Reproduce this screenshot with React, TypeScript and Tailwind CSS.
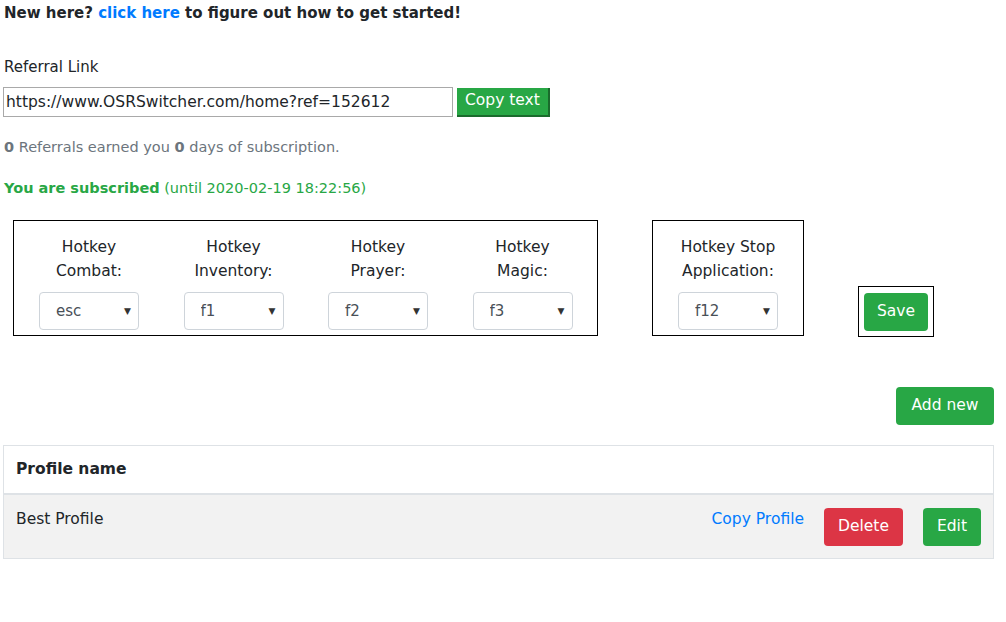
import React from 'react';

const font = { fontFamily: '"DejaVu Sans", "Open Sans", sans-serif' };

const hotkeys = [
  { top: 'Hotkey', bottom: 'Combat:', value: 'esc' },
  { top: 'Hotkey', bottom: 'Inventory:', value: 'f1' },
  { top: 'Hotkey', bottom: 'Prayer:', value: 'f2' },
  { top: 'Hotkey', bottom: 'Magic:', value: 'f3' },
];

function KeySelect({ value }: { value: string }) {
  return (
    <div className="relative w-[100px] h-[38px]">
      <select
        defaultValue={value}
        className="appearance-none w-full h-full bg-white border border-[#ced4da] rounded-[4px] pl-4 text-[15px] text-[#495057] outline-none"
      >
        <option value={value}>{value}</option>
      </select>
      {/* pijltje */}
      <span className="absolute right-[8px] top-[13px] text-[9px] text-[#333] pointer-events-none">▼</span>
    </div>
  );
}

function HotkeyCol({ top, bottom, value }: { top: string; bottom: string; value: string }) {
  return (
    <div className="flex flex-col items-center w-[100px]">
      <div className="text-[15.5px] leading-[24px] text-[#212529] text-center whitespace-nowrap">
        {top}
        <br />
        {bottom}
      </div>
      <div className="mt-[9px]">
        <KeySelect value={value} />
      </div>
    </div>
  );
}

export default function App() {
  return (
    <div className="min-h-screen bg-white pl-[4px] pr-[13px] text-[#212529]" style={font}>
      <p className="pt-[4px] text-[15px] font-bold leading-[18px]">
        New here? <a href="#" className="text-[#007bff]">click here</a> to figure out how to get started!
      </p>

      <div className="mt-[34px] text-[15px] leading-[22px]">Referral Link</div>
      <div className="flex items-center mt-[9px] -ml-[1px]">
        <input
          readOnly
          value="https://www.OSRSwitcher.com/home?ref=152612"
          className="w-[450px] h-[30px] border border-[#a9a9a9] px-[2px] text-[15.5px] text-[#212529] outline-none"
          style={font}
        />
        <button className="ml-[4px] h-[29px] px-[8px] bg-[#28a745] text-white text-[15.5px] border-b-2 border-r-2 border-[#1a6b2c]">
          Copy text
        </button>
      </div>

      <p className="mt-[20px] text-[14.5px] text-[#6c757d] leading-[20px]">
        <b>0</b> Referrals earned you <b>0</b> days of subscription.
      </p>

      <p className="mt-[20px] text-[14.5px] text-[#28a745] leading-[22px]">
        <b>You are subscribed</b> (until 2020-02-19 18:22:56)
      </p>

      <div className="flex items-start mt-[21px]">
        <div className="ml-[9px] w-[585px] h-[116px] border border-black flex items-start pt-[14px] pl-[25px] gap-[44.5px]">
          {hotkeys.map((h) => (
            <HotkeyCol key={h.bottom} {...h} />
          ))}
        </div>
        <div className="ml-[54px] w-[152px] h-[116px] border border-black flex justify-center pt-[14px]">
          <HotkeyCol top="Hotkey Stop" bottom="Application:" value="f12" />
        </div>
        <div className="ml-[54px] mt-[66px] w-[76px] h-[51px] border border-black flex items-center justify-center">
          <button className="w-[64px] h-[38px] bg-[#28a745] text-white text-[15.5px] rounded-[4px]">Save</button>
        </div>
      </div>

      <div className="flex justify-end mt-[50px]">
        <button className="w-[98px] h-[38px] bg-[#28a745] text-white text-[15.5px] rounded-[4px] -mr-[1px]">Add new</button>
      </div>

      <table className="w-[991px] -ml-[1px] mt-[20px] border border-[#dee2e6] border-collapse">
        <thead>
          <tr className="border-b-2 border-[#dee2e6]">
            <th className="text-left px-[12px] h-[48px] text-[15.5px] font-bold">Profile name</th>
            <th></th>
          </tr>
        </thead>
        <tbody>
          <tr className="bg-[#f2f2f2] border-b border-[#dee2e6]">
            <td className="px-[12px] pt-[13px] pb-[12px] align-top text-[15.5px] leading-[22px] h-[62px]">Best Profile</td>
            <td className="pr-[12px] align-top pt-[13px] pb-[12px]">
              <div className="flex justify-end items-start">
                <a href="#" className="text-[#007bff] text-[15.5px] leading-[22px]">Copy Profile</a>
                <button className="ml-[20px] w-[79px] h-[38px] bg-[#dc3545] text-white text-[15.5px] rounded-[4px]">Delete</button>
                <button className="ml-[20px] w-[58px] h-[38px] bg-[#28a745] text-white text-[15.5px] rounded-[4px]">Edit</button>
              </div>
            </td>
          </tr>
        </tbody>
      </table>
    </div>
  );
}
